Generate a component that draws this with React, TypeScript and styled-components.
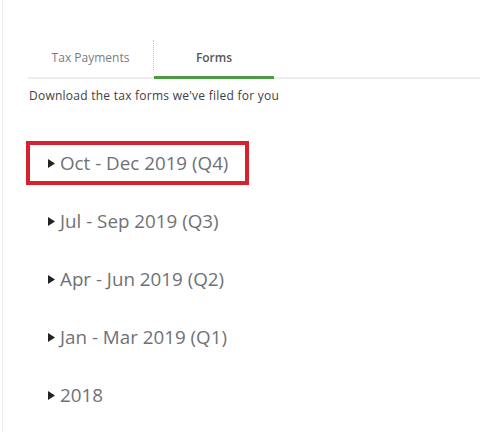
import styled, { createGlobalStyle } from 'styled-components'

const GlobalStyle = createGlobalStyle`
    html, body {
        margin: 0;
        padding: 0;
        background: #ffffff;
    }
    body {
        font-family: "Open Sans", Lato, sans-serif;
    }
`

const Page = styled.div`
    margin-left: 2px;
    height: 432px;
    border-left: 1px solid #ececec;
    padding: 40px 0 0 25px;
    box-sizing: border-box;
`

const Tabs = styled.div`
    display: flex;
    align-items: stretch;
    border-bottom: 2px solid #ececec;
    height: 37px;
`

const Tab = styled.div<{ active?: boolean; width: number }>`
    position: relative;
    width: ${({ width }) => width}px;
    display: flex;
    align-items: center;
    justify-content: center;
    font-size: 12px;
    color: ${({ active }) => (active ? '#55575c' : '#7a7c81')};
    font-weight: ${({ active }) => (active ? 600 : 400)};
    padding-bottom: 2px;
    box-sizing: border-box;
    &::after {
        content: '';
        position: absolute;
        left: 0;
        right: 0;
        bottom: -2px;
        height: 3px;
        background: ${({ active }) => (active ? '#4d9a45' : 'transparent')};
    }
`

const Divider = styled.div`
    width: 0;
    height: 30px;
    border-left: 1px dotted #c4c4c4;
`

const Description = styled.p`
    margin: 9px 0 0 1px;
    font-size: 12px;
    letter-spacing: 0.25px;
    line-height: 16px;
    color: #404145;
`

const List = styled.div`
    display: flex;
    flex-direction: column;
    gap: 14px;
    margin-top: 37px;
    margin-left: -2px;
`

const Row = styled.div<{ highlighted?: boolean }>`
    width: 223px;
    height: 44px;
    box-sizing: border-box;
    border: 4px solid ${({ highlighted }) => (highlighted ? '#d4222f' : 'transparent')};
    display: flex;
    align-items: center;
    gap: 5px;
    padding-left: 18px;
    font-size: 18.8px;
    color: #707176;
`

const Caret = () => (
    <svg width="7" height="9" viewBox="0 0 7 9">
        <polygon points="0,0 7,4.5 0,9" fill="#232323" />
    </svg>
)

const periods = [
    'Oct - Dec 2019 (Q4)',
    'Jul - Sep 2019 (Q3)',
    'Apr - Jun 2019 (Q2)',
    'Jan - Mar 2019 (Q1)',
    '2018',
]

export default function App() {
    return (
        <>
            <GlobalStyle />
            <Page>
                <Tabs>
                    <Tab width={125}>Tax Payments</Tab>
                    <Divider />
                    <Tab width={120} active>Forms</Tab>
                </Tabs>
                <Description>Download the tax forms we've filed for you</Description>
                <List>
                    {periods.map((p, i) => (
                        <Row key={p} highlighted={i === 0}>
                            <Caret />
                            <span>{p}</span>
                        </Row>
                    ))}
                </List>
            </Page>
        </>
    )
}
